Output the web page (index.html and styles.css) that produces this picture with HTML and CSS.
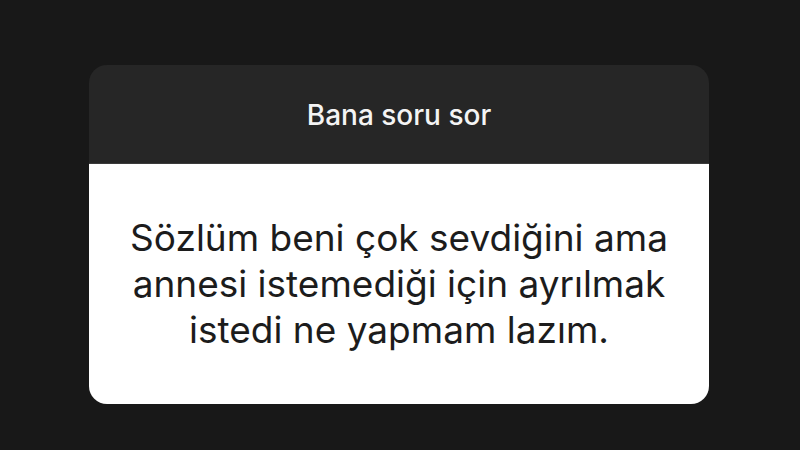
FILE: index.html
```html
<!DOCTYPE html>
<html lang="tr">
<head>
    <meta charset="UTF-8">
    <meta name="viewport" content="width=device-width, initial-scale=1.0">
    <title>Bana soru sor</title>
    <link rel="stylesheet" href="styles.css">
</head>
<body>
    <div class="stage">
        <div class="card">
            <div class="card-header">Bana soru sor</div>
            <div class="card-body">
                <p class="question">Sözlüm beni çok sevdiğini ama<br>annesi istemediği için ayrılmak<br>istedi ne yapmam lazım.</p>
            </div>
        </div>
    </div>
</body>
</html>
```

FILE: styles.css
```css
body { margin: 0; background: #181818; font-family: Inter, 'Liberation Sans', sans-serif; }
.stage {
    height: 450px;
    padding-top: 65px;
    box-sizing: border-box;
    display: flex;
    justify-content: center;
}
.card {
    width: 620px;
    height: 339px;
    border-radius: 18px;
    overflow: hidden;
    display: flex;
    flex-direction: column;
    margin-left: -2px;
}
.card-header {
    height: 96px;
    padding-top: 2px;
    background: #262626;
    color: #f4f4f4;
    font-size: 28px;
    font-weight: 500;
    display: flex;
    align-items: center;
    justify-content: center;
    border-bottom: 1px solid #3a3a3a;
}
.card-body {
    flex: 1;
    background: #ffffff;
    display: flex;
    align-items: center;
    justify-content: center;
}
.question {
    margin: 0;
    color: #1c1c1c;
    font-size: 37px;
    line-height: 46px;
    text-align: center;
}
```
